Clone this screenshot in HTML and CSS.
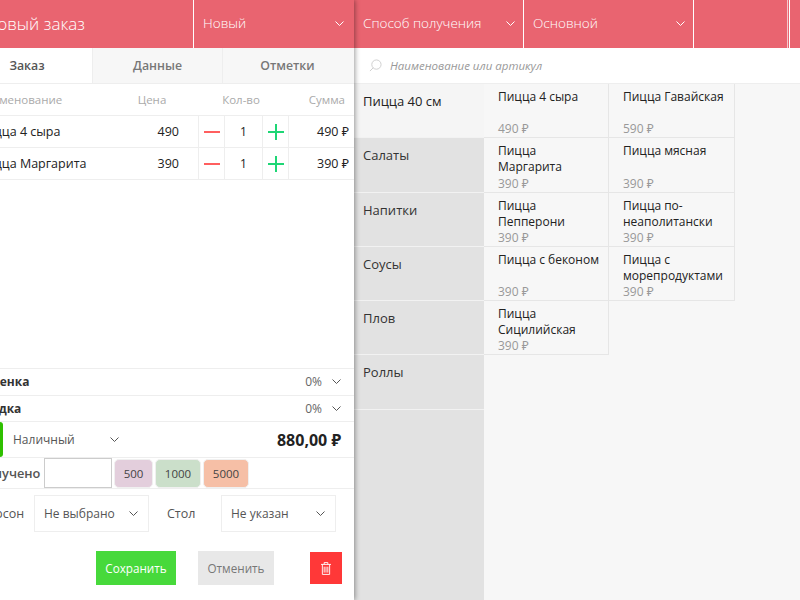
FILE: index.html
```html
<!DOCTYPE html>
<html lang="ru">
<head>
    <meta charset="UTF-8">
    <title>Новый заказ</title>
    <link rel="stylesheet" href="styles.css">
</head>
<body>
<div class="app">
    <div class="order">
        <div class="head">
            <div class="head-title">Новый заказ</div>
            <div class="head-select status">Новый
                <svg class="arrow" width="9" height="5" viewBox="0 0 9 5"><path d="M.5.5l4 4 4-4"/></svg>
            </div>
        </div>
        <div class="tabs">
            <div class="tab on">Заказ</div>
            <div class="tab">Данные</div>
            <div class="tab">Отметки</div>
        </div>
        <div class="row-head">
            <span class="c-name">Наименование</span>
            <span class="c-price">Цена</span>
            <span class="c-qty">Кол-во</span>
            <span class="c-sum">Сумма</span>
        </div>
        <div class="row">
            <span class="c-name">Пицца 4 сыра</span>
            <span class="c-price">490</span>
            <span class="btn-qty"><i class="minus"></i></span>
            <span class="qty">1</span>
            <span class="btn-qty"><i class="plus"></i></span>
            <span class="c-sum">490 ₽</span>
        </div>
        <div class="row">
            <span class="c-name">Пицца Маргарита</span>
            <span class="c-price">390</span>
            <span class="btn-qty"><i class="minus"></i></span>
            <span class="qty">1</span>
            <span class="btn-qty"><i class="plus"></i></span>
            <span class="c-sum">390 ₽</span>
        </div>
        <div class="spacer"></div>
        <div class="line">
            <b>Наценка</b>
            <span class="pct">0%</span>
            <svg class="arrow dark" width="9" height="5" viewBox="0 0 9 5"><path d="M.5.5l4 4 4-4"/></svg>
        </div>
        <div class="line">
            <b>Скидка</b>
            <span class="pct">0%</span>
            <svg class="arrow dark" width="9" height="5" viewBox="0 0 9 5"><path d="M.5.5l4 4 4-4"/></svg>
        </div>
        <div class="pay">
            <div class="pay-mark"></div>
            <div class="pay-type">Наличный
                <svg class="arrow dark" width="9" height="5" viewBox="0 0 9 5"><path d="M.5.5l4 4 4-4"/></svg>
            </div>
            <div class="total">880,00 ₽</div>
        </div>
        <div class="got">
            <b>Получено</b>
            <div class="got-input"></div>
            <div class="cash pink">500</div>
            <div class="cash green">1000</div>
            <div class="cash orange">5000</div>
        </div>
        <div class="extra">
            <span class="extra-label first">Персон</span>
            <div class="pick">Не выбрано
                <svg class="arrow dark" width="9" height="5" viewBox="0 0 9 5"><path d="M.5.5l4 4 4-4"/></svg>
            </div>
            <span class="extra-label">Стол</span>
            <div class="pick">Не указан
                <svg class="arrow dark" width="9" height="5" viewBox="0 0 9 5"><path d="M.5.5l4 4 4-4"/></svg>
            </div>
        </div>
        <div class="actions">
            <div class="save">Сохранить</div>
            <div class="cancel">Отменить</div>
            <div class="del">
                <svg width="10" height="13" viewBox="0 0 11 14"><path d="M0 2.500h11M3.500 2.500V.5h4v2M1.500 2.500v11h8v-11M3.500 5v6.500M5.500 5v6.500M7.500 5v6.500"/></svg>
            </div>
        </div>
    </div>
    <div class="shop">
        <div class="head">
            <div class="head-select way">Способ получения
                <svg class="arrow" width="9" height="5" viewBox="0 0 9 5"><path d="M.5.5l4 4 4-4"/></svg>
            </div>
            <div class="head-select base">Основной
                <svg class="arrow" width="9" height="5" viewBox="0 0 9 5"><path d="M.5.5l4 4 4-4"/></svg>
            </div>
            <div class="head-blank"></div>
            <div class="head-end"></div>
        </div>
        <div class="search">
            <svg width="13" height="13" viewBox="0 0 14 14"><circle cx="8" cy="6" r="5"/><path d="M4.500 9.500L1 13"/></svg>
            <span>Наименование или артикул</span>
        </div>
        <div class="catalog">
            <div class="cats">
                <div class="cat on">Пицца 40 см</div>
                <div class="cat">Салаты</div>
                <div class="cat">Напитки</div>
                <div class="cat">Соусы</div>
                <div class="cat">Плов</div>
                <div class="cat">Роллы</div>
            </div>
            <div class="goods">
                <div class="good"><div class="good-name">Пицца 4 сыра</div><div class="good-price">490 ₽</div></div>
                <div class="good"><div class="good-name">Пицца Гавайская</div><div class="good-price">590 ₽</div></div>
                <div class="good"><div class="good-name">Пицца Маргарита</div><div class="good-price">390 ₽</div></div>
                <div class="good"><div class="good-name">Пицца мясная</div><div class="good-price">390 ₽</div></div>
                <div class="good"><div class="good-name">Пицца Пепперони</div><div class="good-price">390 ₽</div></div>
                <div class="good"><div class="good-name">Пицца по-неаполитански</div><div class="good-price">390 ₽</div></div>
                <div class="good"><div class="good-name">Пицца с беконом</div><div class="good-price">390 ₽</div></div>
                <div class="good"><div class="good-name">Пицца с морепродуктами</div><div class="good-price">390 ₽</div></div>
                <div class="good"><div class="good-name">Пицца Сицилийская</div><div class="good-price">390 ₽</div></div>
            </div>
        </div>
    </div>
</div>
</body>
</html>
```

FILE: styles.css
```css
*{
    margin:0;
    padding:0;
    box-sizing:border-box;
}

html,body{
    height:100%;
    overflow:hidden;
}

body{
    font-family:"Open Sans","Noto Sans",sans-serif;
    font-size:12px;
    color:#333;
    background:#f7f7f7;
}

.app{
    display:flex;
    width:838px;
    height:600px;
    margin-left:-38px;
}

/* left side */
.order{
    width:392px;
    height:600px;
    flex:none;
    display:flex;
    flex-direction:column;
    background:#fff;
    position:relative;
    z-index:2;
    box-shadow:1px 0 5px rgba(0,0,0,.4);
}

.head{
    height:48px;
    flex:none;
    display:flex;
    background:#e96470;
    color:#fff;
}

.head-title{
    width:232px;
    padding-left:23px;
    font-size:17px;
    font-weight:300;
    line-height:47px;
    border-right:1px solid #fff;
}

.head-select{
    display:flex;
    align-items:center;
    justify-content:space-between;
    font-size:13.500px;
    font-weight:300;
    padding:0 12px 2px 9px;
    border-right:1px solid #fff;
}

.status{
    flex:1;
    border-right:0;
    padding-right:10px;
}

.arrow{
    flex:none;
    fill:none;
    stroke:#fff;
    stroke-width:1;
}

.arrow.dark{
    stroke:#555;
}

.tabs{
    display:flex;
    height:36px;
    flex:none;
    border-bottom:1px solid #eee;
}

.tab{
    width:130px;
    text-align:center;
    line-height:35px;
    font-size:12.300px;
    font-weight:600;
    color:#777;
    background:#f7f7f7;
    border-left:1px solid #eee;
}

.tab:last-child{
    width:132px;
    padding-right:2px;
}

.tab.on{
    color:#555;
    background:#fff;
    border-left:0;
}

.row-head,.row{
    display:flex;
    align-items:center;
    flex:none;
    height:32px;
    border-bottom:1px solid #eee;
}

.row-head{
    color:#aaa;
    font-size:11.500px;
}

.row{
    font-size:12.500px;
    color:#222;
}

.c-name{
    flex:1;
    padding-left:15px;
}

.c-price{
    width:50px;
    margin-right:19px;
    text-align:right;
}

.row .c-name,.row .c-price,.row .c-sum{
    padding-bottom:1px;
}

.row-head .c-price{
    width:60px;
    margin-right:19px;
    text-align:center;
}

.row-head .c-qty{
    width:80px;
    text-align:center;
}

.c-sum{
    width:65px;
    text-align:right;
    padding-right:5px;
}

.row-head .c-sum{
    width:73px;
    padding-right:9px;
}

.btn-qty{
    width:27px;
    height:100%;
    display:flex;
    align-items:center;
    justify-content:center;
    border-left:1px solid #eee;
    border-right:1px solid #eee;
}

.qty{
    width:37px;
    text-align:center;
    font-size:12px;
}

.minus,.plus{
    display:block;
    width:16px;
    height:16px;
    background:linear-gradient(#ff5f5f,#ff5f5f) center/16px 2px no-repeat;
}

.plus{
    background:linear-gradient(#1ed675,#1ed675) center/16px 2px no-repeat,
               linear-gradient(#1ed675,#1ed675) center/2px 16px no-repeat;
}

.spacer{
    flex:1;
}

.line{
    height:26.500px;
    flex:none;
    display:flex;
    align-items:center;
    padding:0 13px 0 13px;
    border-top:1px solid #eee;
    color:#333;
}

.line b{
    flex:1;
    font-weight:700;
    font-size:12px;
}

.pct{
    color:#666;
    margin-right:10px;
    font-size:12px;
}

.pay{
    height:36px;
    flex:none;
    display:flex;
    align-items:center;
    border-top:1px solid #eee;
    padding-right:13px;
}

.pay-mark{
    width:41px;
    height:35px;
    background:#2fc000;
    border-radius:0 3px 3px 0;
}

.pay-type{
    width:106px;
    margin-left:10px;
    display:flex;
    align-items:center;
    justify-content:space-between;
    font-size:12px;
    color:#555;
}

.total{
    flex:1;
    text-align:right;
    font-size:16px;
    font-weight:700;
    color:#222;
}

.got{
    height:32px;
    flex:none;
    display:flex;
    align-items:center;
    border-top:1px solid #eee;
    border-bottom:1px solid #eee;
    padding-left:15px;
}

.got b{
    width:67px;
    font-weight:600;
    font-size:12.800px;
    color:#555;
}

.got-input{
    width:68px;
    height:30px;
    border:1px solid #ccc;
    background:#fff;
}

.cash{
    width:46px;
    height:29px;
    margin-left:2px;
    line-height:28px;
    text-align:center;
    font-size:11.500px;
    border-radius:5px;
    color:#444;
    border:1px solid #f0f0f0;
}

.pink{ width:39px; background:#e3cedc; }
.green{ background:#cbdfca; }
.orange{ background:#f6bfa6; }

.extra{
    display:flex;
    align-items:center;
    flex:none;
    margin-top:6px;
    height:37px;
}

.extra-label{
    width:72px;
    padding-left:18px;
    color:#555;
    font-size:12.500px;
}

.extra-label.first{
    padding-left:17px;
}

.pick{
    width:115px;
    height:37px;
    display:flex;
    align-items:center;
    justify-content:space-between;
    padding:0 10px 0 9px;
    border:1px solid #eee;
    color:#555;
    font-size:12px;
}

.actions{
    display:flex;
    align-items:center;
    flex:none;
    margin-top:19px;
    padding:0 0 15px 134px;
}

.save,.cancel{
    height:34px;
    line-height:34px;
    text-align:center;
    font-size:11.700px;
}

.save{
    width:80px;
    background:#47d93b;
    color:#fff;
}

.cancel{
    width:76px;
    margin-left:22px;
    background:#e8e8e8;
    color:#777;
}

.del{
    width:32px;
    height:32px;
    margin-left:36px;
    display:flex;
    align-items:center;
    justify-content:center;
    background:#ff3838;
}

.del svg{
    fill:none;
    stroke:#fff;
    stroke-width:1;
}

/* right side */
.shop{
    flex:1;
    display:flex;
    flex-direction:column;
    min-width:0;
}

.way,.base{
    width:170px;
    padding:0 8px 2px 9px;
}

.head-blank{
    width:94px;
    border-right:1px solid #f3c9cd;
}

.head-end{
    flex:1;
    margin-left:1px;
    border-left:1px solid #fff;
}

.search{
    height:36px;
    flex:none;
    display:flex;
    align-items:center;
    gap:8px;
    padding-left:15px;
    background:#fff;
    border-bottom:1px solid #eee;
    color:#999;
    font-size:11.500px;
    font-style:italic;
}

.search svg{
    fill:none;
    stroke:#ccc;
}

.catalog{
    flex:1;
    display:flex;
    align-items:flex-start;
}

.cats{
    width:130px;
    height:100%;
    flex:none;
    background:#e2e2e2;
}

.cat{
    height:54.250px;
    padding:8px 9px 0;
    border-bottom:1px solid #f2f2f2;
    font-size:13px;
    color:#333;
    line-height:18px;
}

.cat.on{
    background:#f5f5f5;
    color:#222;
}

.goods{
    width:251px;
    display:flex;
    flex-wrap:wrap;
}

.good{
    width:125px;
    height:54.250px;
    padding:5px 9px 1px 14px;
    display:flex;
    flex-direction:column;
    justify-content:space-between;
    border-right:1px solid #e6e6e6;
    border-bottom:1px solid #e6e6e6;
}

.good:nth-child(2n){
    width:126px;
}

.good-name{
    font-size:12px;
    line-height:16px;
    color:#222;
}

.good-price{
    font-size:12px;
    line-height:15px;
    color:#999;
}
```
